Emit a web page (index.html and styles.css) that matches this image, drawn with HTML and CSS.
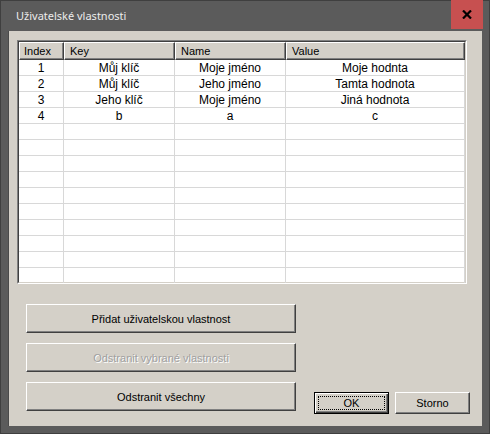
FILE: index.html
```html
<!DOCTYPE html>
<html>
<head>
<meta charset="utf-8">
<link rel="stylesheet" href="styles.css">
</head>
<body>
<div class="window">
  <div class="titlebar">
    <span class="title">Uživatelské vlastnosti</span>
    <div class="close"><svg width="10" height="9" viewBox="0 0 10 9"><path d="M1 0.5 L9 8.5 M9 0.5 L1 8.5" stroke="#000" stroke-width="2.2"/></svg></div>
  </div>
  <div class="content">
    <div class="list">
      <div class="grid">
        <div class="hd">Index</div><div class="hd">Key</div><div class="hd">Name</div><div class="hd">Value</div>
        <div class="c">1</div><div class="c">Můj klíč</div><div class="c">Moje jméno</div><div class="c">Moje hodnta</div>
        <div class="c">2</div><div class="c">Můj klíč</div><div class="c">Jeho jméno</div><div class="c">Tamta hodnota</div>
        <div class="c">3</div><div class="c">Jeho klíč</div><div class="c">Moje jméno</div><div class="c">Jiná hodnota</div>
        <div class="c">4</div><div class="c">b</div><div class="c">a</div><div class="c">c</div>
        <div class="c"></div><div class="c"></div><div class="c"></div><div class="c"></div>
        <div class="c"></div><div class="c"></div><div class="c"></div><div class="c"></div>
        <div class="c"></div><div class="c"></div><div class="c"></div><div class="c"></div>
        <div class="c"></div><div class="c"></div><div class="c"></div><div class="c"></div>
        <div class="c"></div><div class="c"></div><div class="c"></div><div class="c"></div>
        <div class="c"></div><div class="c"></div><div class="c"></div><div class="c"></div>
        <div class="c"></div><div class="c"></div><div class="c"></div><div class="c"></div>
        <div class="c"></div><div class="c"></div><div class="c"></div><div class="c"></div>
        <div class="c"></div><div class="c"></div><div class="c"></div><div class="c"></div>
        <div class="c"></div><div class="c"></div><div class="c"></div><div class="c"></div>
        <div class="c last"></div><div class="c last"></div><div class="c last"></div><div class="c last"></div>
      </div>
    </div>
    <div class="bottom">
      <div class="actions">
        <button class="btn big">Přidat uživatelskou vlastnost</button>
        <button class="btn big disabled">Odstranit vybrané vlastnosti</button>
        <button class="btn big">Odstranit všechny</button>
      </div>
      <div class="dlg">
        <button class="btn small default"><span class="focus">OK</span></button>
        <button class="btn small">Storno</button>
      </div>
    </div>
  </div>
</div>
</body>
</html>
```
FILE: styles.css
```css
html, body { margin: 0; padding: 0; }
body { width: 490px; height: 434px; overflow: hidden; background: #585858; font-family: "Liberation Sans", Arial, sans-serif; font-size: 11px; color: #000; }
.window { width: 490px; height: 434px; box-sizing: border-box; background: #5b5b5b; border: 1px solid #3f3f3f; display: flex; flex-direction: column; padding: 0 7px 7px 7px; }
.titlebar { height: 30px; display: flex; align-items: flex-start; justify-content: space-between; margin-right: -1px; }
.title { font-family: "Noto Sans", "Open Sans", sans-serif; font-size: 11px; color: #ececec; margin-top: 7px; margin-left: 8px; }
.close { width: 32px; height: 29px; background: #c75050; display: flex; align-items: center; justify-content: center; margin-top: -1px; }
.content { flex: 1; background: #d4d0c8; display: flex; flex-direction: column; padding: 9px 15px 12px 8px; box-sizing: border-box; border-left: 1px solid #4a4a4a; }
.list { height: 244px; box-sizing: border-box; border-top: 1px solid #808080; border-left: 1px solid #808080; border-right: 1px solid #fff; border-bottom: 1px solid #fff; overflow: hidden; }
.grid { height: 100%; box-sizing: border-box; border-top: 1px solid #404040; border-left: 1px solid #404040; border-right: 1px solid #d4d0c8; border-bottom: 1px solid #d4d0c8; background: #fff; display: grid; grid-template-columns: 45px 111px 111px 179px; grid-template-rows: 18px repeat(14, 16px); align-content: start; }
.hd { background: #d4d0c8; border-top: 1px solid #fff; border-left: 1px solid #fff; border-right: 1px solid #404040; border-bottom: 1px solid #404040; box-shadow: inset -1px -1px 0 #808080; padding-left: 5px; line-height: 16px; color: #000; }
.hd:first-child { padding-left: 4px; }
.c { border-right: 1px solid #d8d8d8; border-bottom: 1px solid #d8d8d8; text-align: center; line-height: 15px; padding-top: 1px; height: 16px; box-sizing: border-box; font-size: 12px; }
.bottom { flex: 1; display: flex; justify-content: space-between; align-items: flex-end; }
.actions { display: flex; flex-direction: column; gap: 10px; padding-left: 9px; margin-bottom: 3px; }
.btn { font-family: "Liberation Sans", Arial, sans-serif; font-size: 11px; color: #000; background: #d4d0c8; border-top: 1px solid #fff; border-left: 1px solid #fff; border-right: 1px solid #404040; border-bottom: 1px solid #404040; box-shadow: inset -1px -1px 0 #808080; padding: 0; margin: 0; box-sizing: border-box; }
.big { width: 270px; height: 29px; }
.disabled { color: #a0a0a0; text-shadow: 1px 1px 0 #fff; }
.dlg { display: flex; gap: 6px; margin-right: -3px; }
.small { width: 75px; height: 22px; }
.default { border: 1px solid #000; box-shadow: inset 1px 1px 0 #fff, inset -1px -1px 0 #404040, inset -2px -2px 0 #808080; display: flex; padding: 3px; }
.focus { flex: 1; border: 1px dotted #000; display: flex; align-items: center; justify-content: center; }
```
